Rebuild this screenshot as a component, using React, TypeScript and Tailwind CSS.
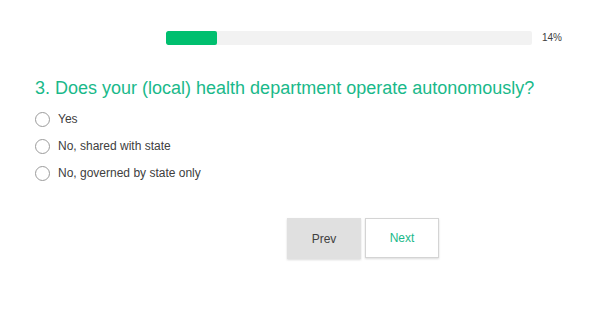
import React from "react";

const options = ["Yes", "No, shared with state", "No, governed by state only"];

export default function App() {
  return (
    <div className="w-[616px] h-[312px] bg-white font-['Liberation_Sans',Arial,sans-serif]">
      {/* progress */}
      <div className="flex items-center pt-[31px] pl-[166px]">
        <div className="w-[366px] h-[14px] bg-[#f2f2f2] rounded-[2px] overflow-hidden">
          <div className="h-full bg-[#00bf6f] rounded-[2px]" style={{ width: "14%" }} />
        </div>
        <span className="ml-[10px] text-[10px] text-[#404040] leading-none">14%</span>
      </div>

      {/* question */}
      <div className="pl-[35px] mt-[32px]">
        <h2 className="text-[18px] leading-[22px] text-[#1ab98a]">
          3. Does your (local) health department operate autonomously?
        </h2>
        <div className="mt-[13px] flex flex-col gap-[13px]">
          {options.map((o) => (
            <label key={o} className="flex items-center h-[14px]">
              <span className="w-[15px] h-[15px] rounded-full border border-[#9b9b9b] bg-white" />
              <span className="ml-[8px] text-[12px] text-[#404040] leading-none">{o}</span>
            </label>
          ))}
        </div>
      </div>

      {/* nav */}
      <div className="flex gap-[4px] pl-[287px] mt-[38px]">
        <button className="w-[74px] h-[41px] bg-[#e0e0e0] text-[12px] text-[#404040] shadow-[0_1px_2px_rgba(0,0,0,0.15)]">
          Prev
        </button>
        <button className="w-[74px] h-[40px] bg-white border border-[#d4d4d4] text-[12px] text-[#1ab98a] shadow-[0_1px_2px_rgba(0,0,0,0.15)]">
          Next
        </button>
      </div>
    </div>
  );
}
